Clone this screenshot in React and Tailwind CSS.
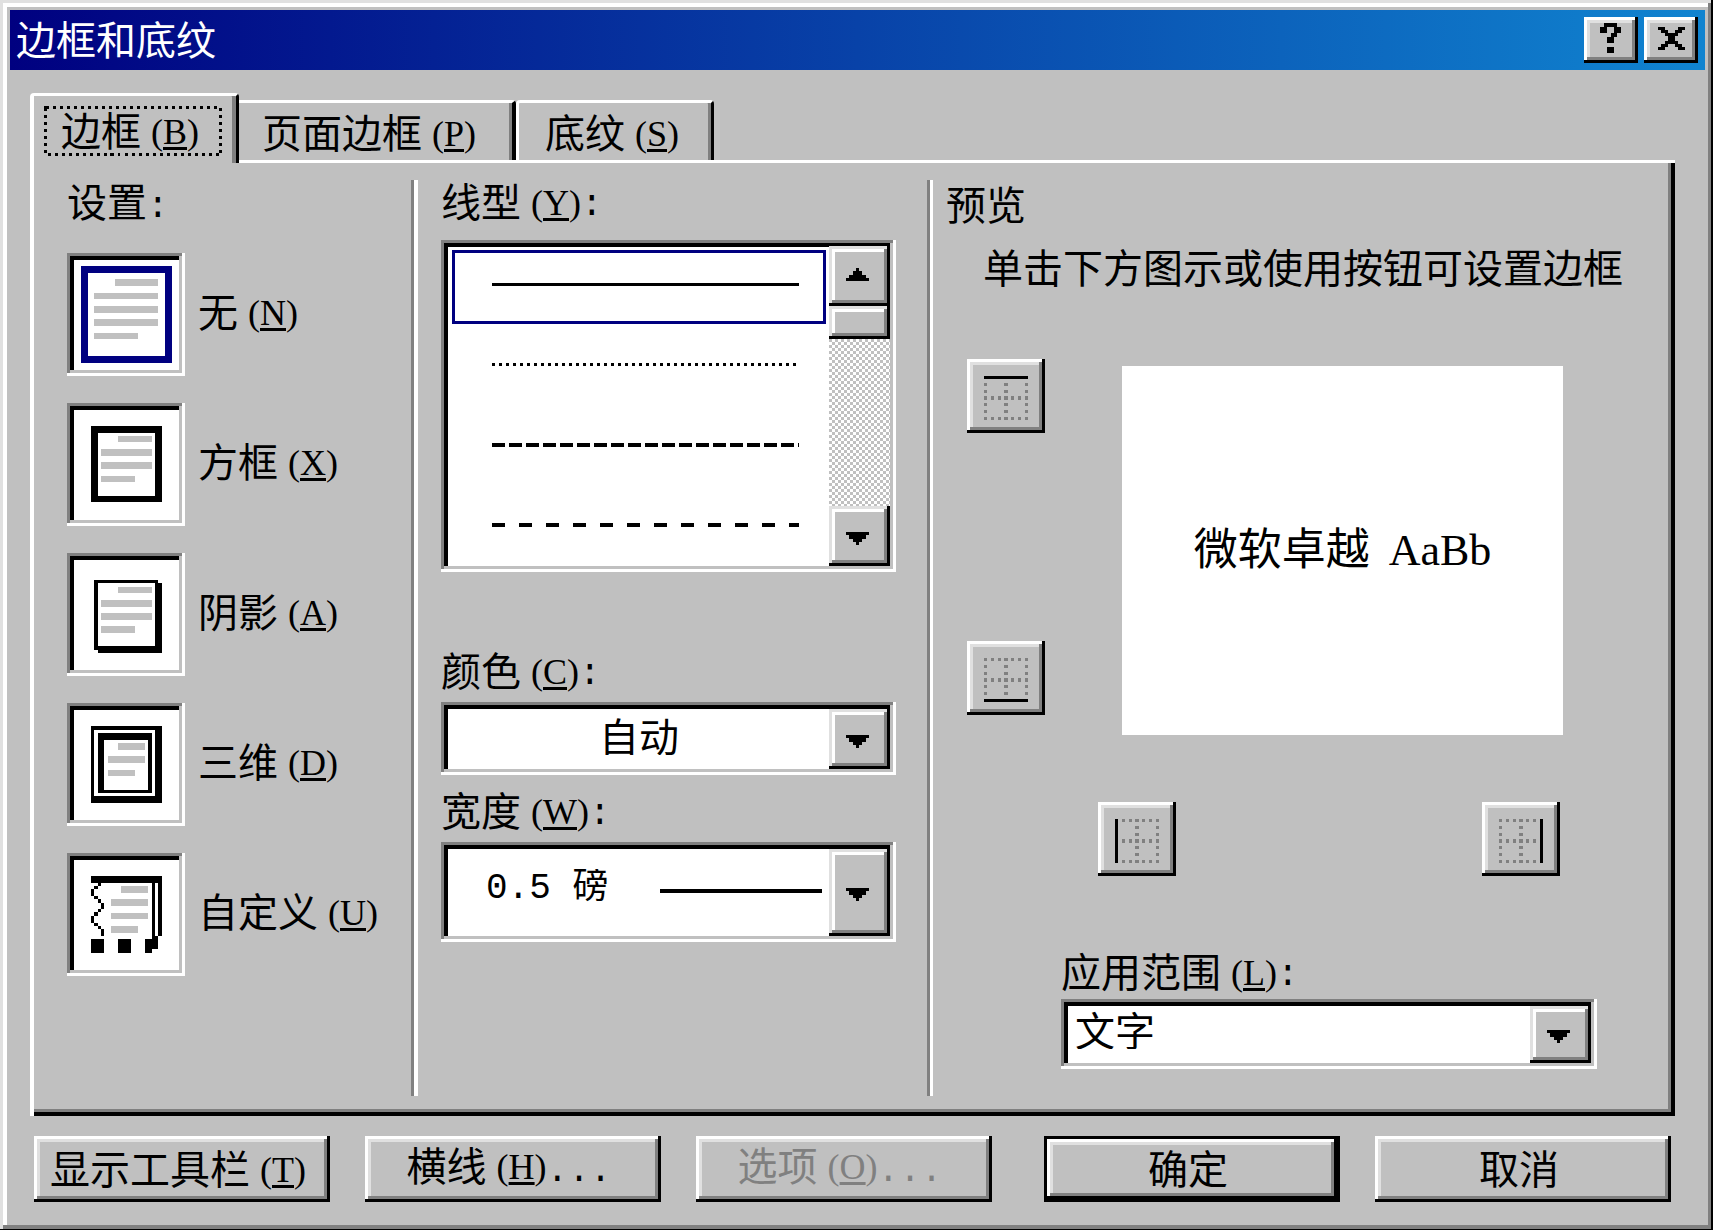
import React, { useState } from "react";

const RAISED =
  "bg-[#c0c0c0] shadow-[inset_-3px_-3px_0_#000,inset_3px_3px_0_#fff,inset_-6px_-6px_0_#808080,inset_6px_6px_0_#e0e0e0]";
const RAISED_SOFT =
  "bg-[#c0c0c0] shadow-[inset_-3px_-3px_0_#000,inset_3px_3px_0_#e0e0e0,inset_-6px_-6px_0_#808080,inset_6px_6px_0_#fff]";
const SUNKEN =
  "bg-white shadow-[inset_-3px_-3px_0_#fff,inset_3px_3px_0_#808080,inset_-6px_-6px_0_#c0c0c0,inset_7px_7px_0_#000]";

function Key({ k, tail }) {
  return (
    <span className="ml-[10px] align-[2px] font-['Liberation_Serif',serif] text-[36px] leading-9">
      (<span className="underline decoration-[3px] underline-offset-[3px]">{k}</span>)
      {tail && <span className="font-['Liberation_Mono',monospace]">{tail}</span>}
    </span>
  );
}

function Rects({ list, fill }) {
  return list.map(([x, y, w, h], i) => <rect key={i} x={x} y={y} width={w} height={h} fill={fill} />);
}

const SETTINGS = [
  {
    id: "none",
    text: "无",
    k: "N",
    art: <path fillRule="evenodd" fill="#000080" d="M14 13H105V110H14ZM21 20V103H98V20Z" />,
    bars: [[48, 26, 43, 7], [27, 40, 64, 6], [27, 53, 64, 7], [27, 66, 64, 7], [27, 80, 44, 6]],
  },
  {
    id: "box",
    text: "方框",
    k: "X",
    art: <path fillRule="evenodd" d="M24 23H95V99H24ZM31 30V93H88V30Z" />,
    bars: [[51, 33, 34, 6], [34, 46, 51, 7], [34, 59, 51, 7], [34, 73, 34, 6]],
  },
  {
    id: "shadow",
    text: "阴影",
    k: "A",
    art: <path fillRule="evenodd" d="M27 27H91V30H95V100H31V97H27ZM31 30V93H88V30Z" />,
    bars: [[51, 34, 34, 6], [34, 47, 51, 7], [34, 60, 51, 7], [34, 73, 34, 7]],
  },
  {
    id: "three-d",
    text: "三维",
    k: "D",
    art: (
      <path
        fillRule="evenodd"
        d="M24 23H95V100H24ZM27 27V93H88V27ZM31 30H85V90H31ZM37 37V87H81V37Z"
      />
    ),
    bars: [[51, 40, 27, 7], [41, 53, 37, 7], [41, 67, 27, 6]],
  },
  {
    id: "custom",
    text: "自定义",
    k: "U",
    art: (
      <Rects
        fill="#000"
        list={[
          [24, 23, 71, 7], [85, 30, 3, 53], [91, 30, 4, 53], [85, 83, 6, 13], [78, 86, 7, 14],
          [24, 86, 13, 14], [51, 86, 13, 14], [31, 30, 3, 3], [27, 33, 4, 3], [24, 36, 3, 7],
          [27, 43, 4, 3], [31, 46, 3, 4], [34, 50, 3, 6], [31, 56, 3, 3], [27, 59, 4, 4],
          [24, 63, 3, 7], [27, 70, 4, 3], [31, 73, 3, 3], [34, 76, 3, 7],
        ]}
      />
    ),
    bars: [[54, 33, 27, 7], [44, 46, 37, 7], [44, 60, 37, 6], [44, 73, 27, 7]],
  },
];

function Arrow({ up }) {
  return (
    <svg viewBox="0 0 7 4" className="h-[13px] w-[23px]" shapeRendering="crispEdges" preserveAspectRatio="none" aria-hidden="true">
      <path d={up ? "M3 0h1v1h1v1h1v1h1v1H0V3h1V2h1V1h1z" : "M0 0h7v1H6v1H5v1H4v1H3V3H2V2H1V1H0z"} />
    </svg>
  );
}

function Combo({ id, className, selectClass, value, options, extra }) {
  return (
    <div className={`flex pt-[7px] pr-[6px] pb-[6px] pl-[7px] ${SUNKEN} ${className}`}>
      <select
        id={id}
        defaultValue={value}
        className={`min-w-0 flex-1 appearance-none bg-transparent outline-none ${selectClass}`}
      >
        {options.map((o) => (
          <option key={o}>{o}</option>
        ))}
      </select>
      {extra}
      <span className={`flex w-[61px] items-center justify-center pt-1 pr-1 ${RAISED_SOFT}`}>
        <Arrow />
      </span>
    </div>
  );
}

const EVENS = [0, 2, 4, 6, 8, 10, 12];
function EdgeIcon({ side }) {
  const line = { top: [0, 0, 13, 1], bottom: [0, 12, 13, 1], left: [0, 0, 1, 13], right: [12, 0, 1, 13] }[side];
  const dots = [];
  for (const y of EVENS)
    for (const x of EVENS) {
      if (x % 6 !== 0 && y % 6 !== 0) continue;
      if ((side === "top" && y === 0) || (side === "bottom" && y === 12)) continue;
      if ((side === "left" && x === 0) || (side === "right" && x === 12)) continue;
      dots.push([x, y, 1, 1]);
    }
  return (
    <svg viewBox="0 0 13 13" className="size-11" shapeRendering="crispEdges" aria-hidden="true">
      <Rects list={dots} fill="#808080" />
      <Rects list={[line]} fill="#000" />
    </svg>
  );
}

function EdgeButton({ side, name }) {
  return (
    <button type="button" aria-label={name} className={`flex h-[74px] w-[78px] items-center justify-center pt-[3px] ${RAISED}`}>
      <EdgeIcon side={side} />
    </button>
  );
}

const LINES = [
  { name: "实线", h: 3, dash: null },
  { name: "点线", h: 3, dash: "3 4" },
  { name: "短划线", h: 4, dash: "13 4" },
  { name: "长划线", h: 4, dash: "13 14" },
];

function DialogButton({ children, className = "", ...rest }) {
  return (
    <button type="button" className={`h-[66px] w-[296px] whitespace-nowrap pr-2 pb-1 ${className}`} {...rest}>
      {children}
    </button>
  );
}

function Dots() {
  return <span className="font-['Liberation_Mono',monospace] text-[36px] leading-9">...</span>;
}

export default function App() {
  const [setting, setSetting] = useState("none");
  const [line, setLine] = useState(0);

  return (
    <main className="flex min-h-screen w-full flex-col bg-[#c0c0c0] p-[10px] pr-2 pb-[29px] font-['Noto_Sans_CJK_SC',sans-serif] text-[40px] leading-10 text-black shadow-[inset_-2px_-2px_0_#000,inset_3px_3px_0_#e0e0e0,inset_-5px_-6px_0_#808080,inset_7px_7px_0_#fff]">
      <header className="flex h-[60px] items-start bg-linear-to-r/srgb from-[#000080] to-[#1084d0] pr-[7px] pl-[6px] text-white">
        <h1 className="mt-2 flex-1">边框和底纹</h1>
        <button type="button" aria-label="帮助" className={`mt-[7px] h-[46px] w-[54px] ${RAISED}`}>
          <svg viewBox="0 0 54 46" className="size-full" shapeRendering="crispEdges">
            <Rects fill="#000" list={[[20, 6, 13, 4], [16, 10, 7, 6], [30, 10, 7, 6], [27, 16, 6, 4], [23, 20, 7, 6], [23, 30, 7, 6]]} />
          </svg>
        </button>
        <button type="button" aria-label="关闭" className={`mt-[7px] ml-[6px] h-[46px] w-[54px] ${RAISED}`}>
          <svg viewBox="0 0 54 46" className="size-full" shapeRendering="crispEdges">
            <Rects
              fill="#000"
              list={[
                [14, 10, 7, 3], [34, 10, 7, 3], [17, 13, 7, 3], [31, 13, 7, 3], [21, 16, 13, 3], [24, 19, 7, 5],
                [21, 24, 13, 3], [17, 27, 7, 3], [31, 27, 7, 3], [14, 30, 7, 3], [34, 30, 7, 3],
              ]}
            />
          </svg>
        </button>
      </header>

      <div role="tablist" className="mt-[23px] ml-5 flex items-end">
        <button
          type="button"
          role="tab"
          aria-selected="true"
          className="relative z-10 -mb-[3px] h-[70px] w-[209px] rounded-t-[4px] border-t-3 border-r-3 border-l-4 border-t-white border-r-black border-l-white bg-[#c0c0c0] pl-[27px] text-left whitespace-nowrap shadow-[inset_-4px_0_0_#808080]"
        >
          边框
          <Key k="B" />
          <svg className="absolute top-[10px] left-[10px] h-[50px] w-[178px]" shapeRendering="crispEdges" aria-hidden="true">
            <rect x="1.5" y="1.5" width="175" height="47" fill="none" stroke="#000" strokeWidth="3" strokeDasharray="3 4" />
          </svg>
        </button>
        <button
          type="button"
          role="tab"
          aria-selected="false"
          className="h-[60px] w-[277px] rounded-tr-[4px] border-t-3 border-r-4 border-t-white border-r-black pl-[23px] text-left whitespace-nowrap shadow-[inset_-3px_0_0_#808080]"
        >
          页面边框
          <Key k="P" />
        </button>
        <button
          type="button"
          role="tab"
          aria-selected="false"
          className="h-[60px] w-[198px] rounded-t-[4px] border-t-3 border-r-3 border-l-3 border-t-white border-r-black border-l-white pl-[26px] text-left whitespace-nowrap shadow-[inset_-3px_0_0_#808080]"
        >
          底纹
          <Key k="S" />
        </button>
      </div>

      <section
        role="tabpanel"
        className="mr-[30px] ml-5 grid grid-cols-[377px_516px_1fr] border-t-3 border-l-4 border-white pt-[17px] pr-[7px] pb-5 shadow-[inset_-4px_-4px_0_#000,inset_-7px_-7px_0_#808080]"
      >
        <fieldset className="pl-[33px]">
          <legend className="h-10">
            设置<span className="font-['Liberation_Mono',monospace] text-[36px] leading-9">:</span>
          </legend>
          <div className="mt-[33px] flex flex-col gap-[27px]">
            {SETTINGS.map((s) => (
              <label key={s.id} className="relative flex items-center gap-[13px]">
                <input
                  type="radio"
                  name="setting"
                  className="peer sr-only"
                  checked={setting === s.id}
                  onChange={() => setSetting(s.id)}
                />
                <span className={`h-[123px] w-[118px] ${SUNKEN}`}>
                  <svg viewBox="0 0 118 123" className="size-full" shapeRendering="crispEdges" aria-hidden="true">
                    <Rects list={s.bars} fill="#c0c0c0" />
                    {s.art}
                  </svg>
                </span>
                <span className="pb-2 whitespace-nowrap">
                  {s.text}
                  <Key k={s.k} />
                </span>
              </label>
            ))}
          </div>
        </fieldset>

        <div className="flex flex-col border-l-3 border-[#808080] pr-[31px] pl-[27px] shadow-[inset_4px_0_0_#fff]">
          <div id="line-label" className="h-10">
            线型
            <Key k="Y" tail=":" />
          </div>
          <div className={`mt-5 flex h-[332px] pt-[6px] pr-[6px] pb-[6px] pl-[7px] ${SUNKEN}`}>
            <div role="listbox" aria-labelledby="line-label" className="flex min-w-0 flex-1 flex-col gap-[6px] overflow-hidden pt-1 pr-[3px] pl-1">
              {LINES.map((l, i) => (
                <button
                  type="button"
                  role="option"
                  key={l.name}
                  aria-label={l.name}
                  aria-selected={line === i}
                  onClick={() => setLine(i)}
                  className={`flex h-[74px] shrink-0 items-center border-3 pr-6 pb-1 pl-[37px] ${line === i ? "border-[#000080]" : "border-transparent"}`}
                >
                  <svg className="h-1 w-full" shapeRendering="crispEdges" aria-hidden="true">
                    <line x1="0" x2="307" y1={l.h / 2} y2={l.h / 2} stroke="#000" strokeWidth={l.h} strokeDasharray={l.dash || undefined} />
                  </svg>
                </button>
              ))}
            </div>
            <div className="flex w-[61px] flex-col bg-[conic-gradient(#c0c0c0_25%,#fff_0_50%,#c0c0c0_0_75%,#fff_0)] bg-[size:6px_6px]">
              <button type="button" aria-label="向上滚动" className={`flex h-[60px] items-center justify-center pr-1 pb-1 ${RAISED_SOFT}`}>
                <Arrow up />
              </button>
              <div className={`h-[33px] ${RAISED_SOFT}`} />
              <button type="button" aria-label="向下滚动" className={`mt-auto flex h-[60px] items-center justify-center pt-1 pr-1 ${RAISED_SOFT}`}>
                <Arrow />
              </button>
            </div>
          </div>

          <label htmlFor="color" className="mt-[77px] h-10">
            颜色
            <Key k="C" tail=":" />
          </label>
          <Combo id="color" className="mt-[13px] h-[73px]" selectClass="pb-2 pl-[151px]" value="自动" options={["自动"]} />

          <label htmlFor="width" className="mt-[14px] h-10">
            宽度
            <Key k="W" tail=":" />
          </label>
          <Combo
            id="width"
            className="mt-[13px] h-[100px]"
            selectClass="pb-2 pl-[38px] font-['Liberation_Mono','Noto_Sans_CJK_SC',monospace] text-[36px]"
            value="0.5 磅"
            options={["0.5 磅"]}
            extra={<span className="mt-[40px] mr-[7px] h-1 w-[162px] bg-black" />}
          />
        </div>

        <div className="flex flex-col border-l-3 border-[#808080] pb-[27px] pl-4 shadow-[inset_3px_0_0_#fff]">
          <h2 className="mt-[3px]">预览</h2>
          <p className="mt-[23px] ml-[37px] whitespace-nowrap">单击下方图示或使用按钮可设置边框</p>
          <div className="mt-[73px] mr-[105px] ml-[21px] flex">
            <div className="flex h-[356px] flex-col justify-between">
              <EdgeButton side="top" name="上边框" />
              <EdgeButton side="bottom" name="下边框" />
            </div>
            <div className="mt-[7px] ml-[77px] flex h-[369px] flex-1 items-center justify-center bg-white font-['Liberation_Serif','Noto_Sans_CJK_SC',serif] text-[44px] whitespace-pre">
              微软卓越 <span className="ml-2">AaBb</span>
            </div>
          </div>
          <div className="mt-[67px] mr-[108px] ml-[152px] flex justify-between">
            <EdgeButton side="left" name="左边框" />
            <EdgeButton side="right" name="右边框" />
          </div>
          <label htmlFor="apply" className="mt-[74px] ml-[115px] h-10">
            应用范围
            <Key k="L" tail=":" />
          </label>
          <Combo id="apply" className="mt-[9px] mr-[71px] ml-[115px] h-[70px]" selectClass="pb-3 pl-[7px]" value="文字" options={["文字"]} />
        </div>
      </section>

      <footer className="mt-5 mr-[34px] ml-6 flex gap-[35px]">
        <DialogButton className={RAISED}>
          显示工具栏
          <Key k="T" />
        </DialogButton>
        <DialogButton className={RAISED}>
          横线
          <Key k="H" />
          <Dots />
        </DialogButton>
        <DialogButton disabled className={`text-[#808080] ${RAISED}`}>
          选项
          <Key k="O" />
          <Dots />
        </DialogButton>
        <DialogButton className="ml-auto bg-[#c0c0c0] shadow-[inset_0_0_0_3px_#000,inset_-6px_-6px_0_#000,inset_6px_6px_0_#fff,inset_-9px_-9px_0_#808080,inset_9px_9px_0_#e0e0e0]">
          确定
        </DialogButton>
        <DialogButton className={RAISED}>取消</DialogButton>
      </footer>
    </main>
  );
}
